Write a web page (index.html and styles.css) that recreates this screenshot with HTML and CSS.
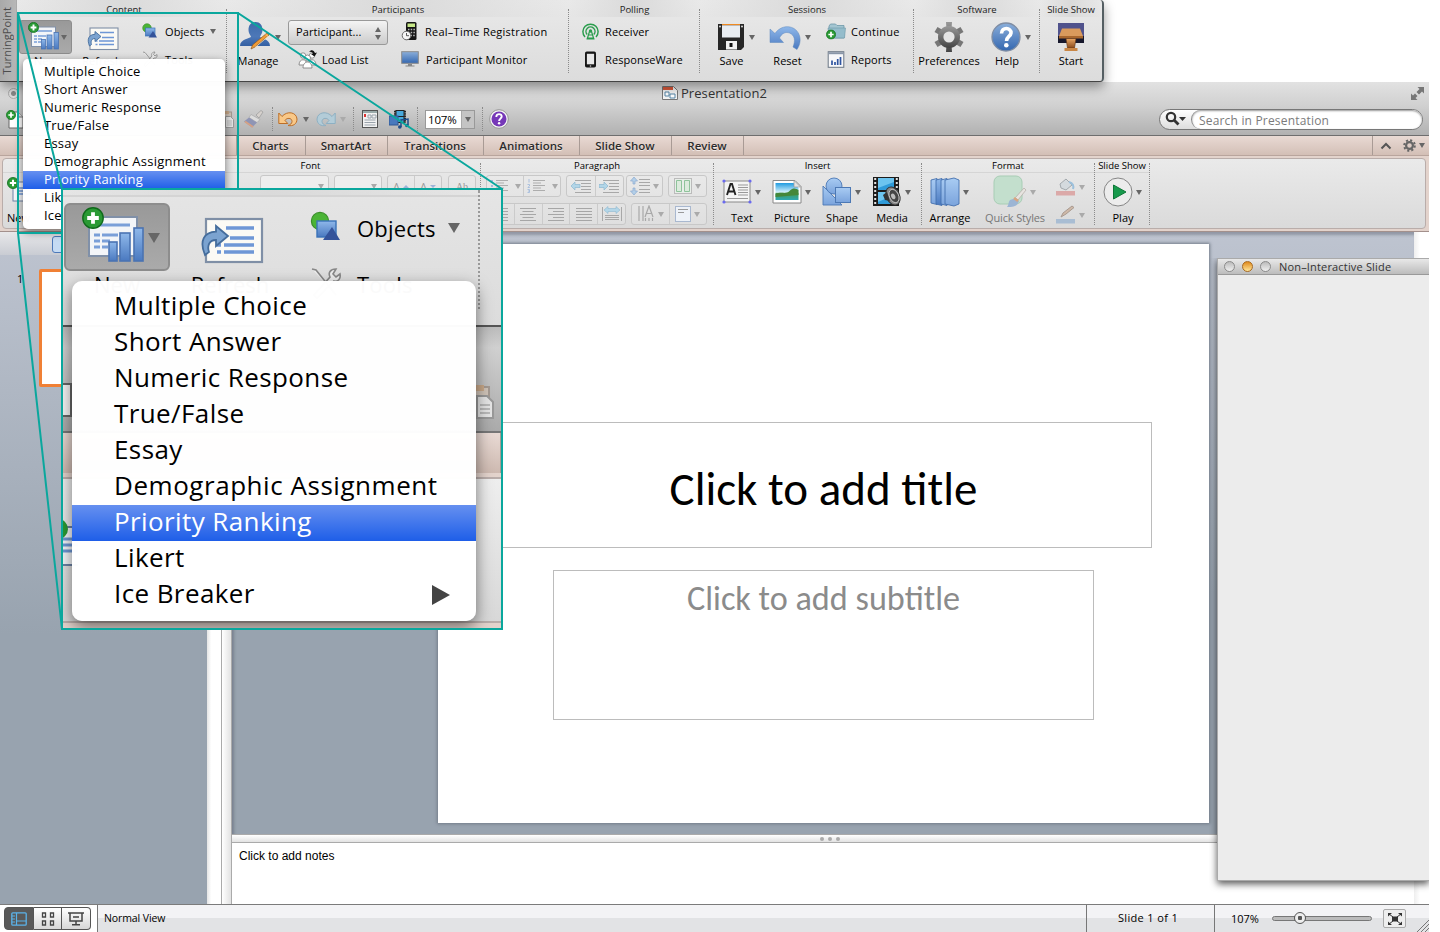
FILE: index.html
```html
<!DOCTYPE html>
<html lang="en">
<head>
<meta charset="utf-8">
<title>Presentation2</title>
<link rel="stylesheet" href="styles.css">
</head>
<body>
<svg class="defs" width="0" height="0">
  <defs>
    <linearGradient id="blue" x1="0" y1="0" x2="0" y2="1"><stop offset="0" stop-color="#8fb8ea"/><stop offset="1" stop-color="#4a79c0"/></linearGradient>
    <linearGradient id="lightblue" x1="0" y1="0" x2="0" y2="1"><stop offset="0" stop-color="#a9ccf3"/><stop offset="1" stop-color="#7aa3dc"/></linearGradient>
    <linearGradient id="gray" x1="0" y1="0" x2="0" y2="1"><stop offset="0" stop-color="#999"/><stop offset="1" stop-color="#444"/></linearGradient>
    <linearGradient id="wood" x1="0" y1="0" x2="0" y2="1"><stop offset="0" stop-color="#e9a765"/><stop offset="1" stop-color="#8a4a1b"/></linearGradient>
    <linearGradient id="sky" x1="0" y1="0" x2="0" y2="1"><stop offset="0" stop-color="#1f9be0"/><stop offset=".55" stop-color="#d8f2fb"/><stop offset=".6" stop-color="#3f9a56"/><stop offset="1" stop-color="#2fa8b5"/></linearGradient>
    <symbol id="plus" viewBox="0 0 11 11"><circle cx="5.5" cy="5.5" r="5.1" fill="#2a9a34" stroke="#0f6a1a" stroke-width=".7"/><path d="M5.500 2.600v5.800M2.600 5.500h5.800" stroke="#fff" stroke-width="1.900"/></symbol>
    <symbol id="new" viewBox="0 0 32 30">
      <rect x="3.500" y="6" width="24" height="19.500" fill="#f3f5f8" stroke="#8090a8"/>
      <path d="M8 10h16M6 15h3M10 15h8M6 18h3M10 18h4M6 21h3M10 21h3" stroke="#7a9fd8" stroke-width="1.500"/>
      <g fill="url(#blue)" stroke="#4a73b2" stroke-width=".8"><rect x="13.500" y="18.500" width="4" height="9.500"/><rect x="19" y="14" width="5" height="14"/><rect x="26" y="11.500" width="4.500" height="16.500"/></g>
      <use href="#plus" x="0" y="1" width="11" height="11"/>
    </symbol>
    <symbol id="refresh" viewBox="0 0 32 24">
      <rect x="3" y="1" width="28" height="21.500" fill="#fbfaf5" stroke="#7f8fa6" stroke-width="1.100"/>
      <path d="M13 5.500h14M15 10.500h12M12 14h15M12 17.500h15M8.500 14h2M8.500 17.500h2" stroke="#6e97d6" stroke-width="1.700"/>
      <path d="M2.500 19C-.5 12 2 7.500 8 7.300V4.500l6 5-6 5v-3c-3.500 0-4.500 3-3.500 6z" fill="#7ba3d0" stroke="#456d9c" stroke-width=".9"/>
    </symbol>
    <symbol id="objects" viewBox="0 0 16 16"><circle cx="5" cy="5" r="4.300" fill="#4bb436" stroke="#3a8f2a" stroke-width=".6"/><rect x="3.500" y="5" width="9.500" height="8" fill="url(#blue)" stroke="#3a73b8" stroke-width=".7"/><path d="M6.500 14.500L11 8l4 6.500z" fill="#34539a"/></symbol>
    <symbol id="tools" viewBox="0 0 16 16"><path d="M1 1l2 .5L9 9l4 5M13 1c-3 0-4 2-3 4L2 14l1.500 1.500L12 7c2 .5 3.500-1 3-3.500L13 5l-1.500-1.500z" fill="#eee" stroke="#888" stroke-width=".8"/></symbol>
    <linearGradient id="manageg" x1="0" y1="0" x2="0" y2="1"><stop offset="0" stop-color="#3d6aaa"/><stop offset=".6" stop-color="#4d78b8"/><stop offset="1" stop-color="#3460a3"/></linearGradient>
    <symbol id="manage" viewBox="0 0 32 32"><path d="M9.500 9c0-5 2.500-8 7-8s7 3 7 8c0 3-1.500 5-2.500 6.500 0 2 10 2 10 9.500H1c0-7.500 11-7.500 11-9.500C11 14 9.500 12 9.500 9z" fill="url(#manageg)"/><path d="M28 12l2 2-14 12-4 2 1.500-4z" fill="#f29b35" stroke="#8c5a24" stroke-width=".7"/><path d="M27 13.500l2 2L16 26.500" fill="none" stroke="#ffe2b0" stroke-width=".8"/></symbol>
    <symbol id="people" viewBox="0 0 20 20"><g fill="#fff" stroke="#858585" stroke-width=".9"><circle cx="5" cy="6.500" r="2.700"/><circle cx="14" cy="6.500" r="2.700"/><path d="M1 16c0-7 8-7 8 0zM10 16c0-7 8-7 8 0z"/><circle cx="9.500" cy="9" r="3"/><path d="M5 19c0-8 9-8 9 0z"/></g><path d="M11 3c2-3 5-2 6 1l2-.5-2.500 4L13 5l2-.5c-.5-1-2-2-4-1.500z" fill="#111"/></symbol>
    <symbol id="clicker" viewBox="0 0 16 20"><rect x="4.500" y="1" width="10.500" height="18" rx="1.500" fill="#151515"/><rect x="6" y="2.500" width="7.500" height="3.500" fill="#c7e888"/><path d="M6.500 8.500h7M6.500 11.500h7M9 14.500h5" stroke="#bbb" stroke-width="1.400" stroke-dasharray="1.500 1.200"/><circle cx="5" cy="14.500" r="4.300" fill="#f7f7f7" stroke="#666"/><path d="M5 12v2.700h2.500" fill="none" stroke="#333" stroke-width=".8"/></symbol>
    <linearGradient id="helpg" x1="0" y1="0" x2="0" y2="1"><stop offset="0" stop-color="#8aaeda"/><stop offset="1" stop-color="#3467b0"/></linearGradient>
    <symbol id="monitor" viewBox="0 0 18 16"><rect x=".7" y=".7" width="16.600" height="11.600" fill="url(#helpg)" stroke="#8a8a8a"/><path d="M7 13h4v1.500h2.500v1h-9v-1H7z" fill="#888"/></symbol>
    <symbol id="receiver" viewBox="0 0 17 17"><g fill="none" stroke="#2a9d4d" stroke-width="1.500"><path d="M3 14a7.600 7.600 0 1 1 11 0M5.200 11.500a4.500 4.500 0 1 1 6.600 0"/></g><circle cx="8.500" cy="8" r="1.700" fill="#2a9d4d"/><path d="M7.500 8.500L5.500 15h6l-2-6.500M4.500 16h8M6.500 12h4" stroke="#2a9d4d" fill="none" stroke-width="1.200"/></symbol>
    <symbol id="phone" viewBox="0 0 12 17"><rect x=".5" y=".5" width="11" height="16" rx="1.800" fill="#171717"/><rect x="2.400" y="2.800" width="7.200" height="10.500" fill="#e8e8e8"/><circle cx="6" cy="15" r=".8" fill="#ccc"/></symbol>
    <symbol id="floppy" viewBox="0 0 28 28"><path d="M1 1h26v23l-3 3H1z" fill="#272727"/><path d="M5 1h18v1.300H5z" fill="#ef8a22"/><path d="M5 2.300h18v12.200H5z" fill="#e9edf2"/><rect x="9" y="18" width="11" height="8.500" fill="#f2f2f2"/><rect x="12.500" y="20" width="3" height="4" fill="#111"/><circle cx="3" cy="3.500" r="1" fill="#ddd"/><circle cx="25" cy="3.500" r="1" fill="#ddd"/></symbol>
    <symbol id="reset" viewBox="0 0 32 28"><path d="M1 6v13.500h13.500l-4-4.500c2-4.500 6-6.500 10-5 5.500 2.500 6 7.500 3.500 14l4 2.500C33 19 32 10 25 5.500 18 1.500 10 4.500 6 10.500z" fill="url(#blue)" stroke="#5b86bd" stroke-width=".5"/></symbol>
    <symbol id="folder" viewBox="0 0 20 17"><path d="M3 3l1.500-2h5L11 2.500h7V15H3z" fill="#a3c5d1" stroke="#6d98a8" stroke-width=".8"/><path d="M2 5h17.500L18.500 15H3z" fill="#94bccb" stroke="#6d98a8" stroke-width=".6"/><use href="#plus" x="0" y="6.500" width="10" height="10"/></symbol>
    <symbol id="report" viewBox="0 0 17 17"><rect x=".7" y=".7" width="15.600" height="15.600" fill="#f8f8fa" stroke="#6b7785"/><path d="M1 2.200h15" stroke="#8996a8" stroke-width="2"/><path d="M4.500 14V9.500M7.500 14v-3M10.200 14V8M13 14V6" stroke="#2f55a0" stroke-width="1.700"/></symbol>
    <symbol id="gear" viewBox="0 0 30 30"><g fill="url(#gray)"><path d="M12 0h6l-.5 7h-5zM12 30h6l-.5-7h-5z"/><g transform="rotate(60 15 15)"><path d="M12 0h6v30h-6z" fill="#777"/></g><g transform="rotate(120 15 15)"><path d="M12 0h6v30h-6z" fill="#777"/></g><circle cx="15" cy="15" r="11"/></g><circle cx="15" cy="15" r="5.600" fill="#e4e4e4"/></symbol>
    <symbol id="help" viewBox="0 0 30 30"><circle cx="15" cy="15" r="14" fill="url(#helpg)" stroke="#7f8da3" stroke-width="1.300"/><path d="M10.500 11.500c0-7 10-6 9.500-.5-.3 3.500-4.500 3.500-4.500 8" fill="none" stroke="#fff" stroke-width="3.600"/><circle cx="15.300" cy="23.200" r="2.300" fill="#fff"/></symbol>
    <symbol id="podium" viewBox="0 0 28 30"><rect x="1" y="1" width="26" height="20" fill="#50528c"/><path d="M1 14h26v7H1z" fill="#17182c"/><path d="M5 6.500h18l3 7.500H2z" fill="#d99a5c"/><path d="M2 14h24v2.500H2z" fill="#a8672e"/><path d="M9 16.500h10L17.500 26h-7z" fill="url(#wood)" stroke="#5e3212" stroke-width=".6"/><path d="M7.500 26h13v3h-13z" fill="#c98746"/></symbol>
    <symbol id="docicon" viewBox="0 0 16 14"><path d="M.5.5h11l4 4v9H.5z" fill="#f4f4f4" stroke="#777"/><path d="M1 1h10v3H1z" fill="#d9593b"/><path d="M3 6h4v4H3zM8 8h5v4H8z" fill="#fff" stroke="#5786a8"/></symbol>
    <symbol id="undo" viewBox="0 0 20 16"><path d="M.8 2v10.500h9L7 9.500c1.500-3 7-3 7 1 0 2-2 3.500-4 4 5 1 9-1.500 9-6.500C18.500 1 9-.5 4 5.500z" fill="#f9c888" stroke="#bd6f28"/></symbol>
    <symbol id="redo" viewBox="0 0 20 16"><path d="M19.200 2v10.500h-9L13 9.500c-1.500-3-7-3-7 1 0 2 2 3.500 4 4-5 1-9-1.500-9-6.500C1.500 1 11-.5 16 5.500z" fill="#b3ccd8" stroke="#8db0c3"/></symbol>
    <symbol id="brush" viewBox="0 0 20 18"><path d="M12 5l5-4.500 2 1.500-4 6z" fill="#d6d1cd" stroke="#999" stroke-width=".7"/><path d="M7 4.500l9 5-3 3-8-5z" fill="#ddd" stroke="#999" stroke-width=".5"/><path d="M5 7.500l8 5-5 5L0 11.500z" fill="#8f95b5"/><path d="M1 11.500l8 5.500" stroke="#d5a184" stroke-width="2"/></symbol>
    <symbol id="clip" viewBox="0 0 12 18"><rect x=".5" y="2" width="9" height="12" fill="#cfc3b8" stroke="#a49a92"/><path d="M3 1h4v3H3z" fill="#c9a98a"/><path d="M3.500 6.500h5l3 3v8h-8z" fill="#e5e5e5" stroke="#999"/><path d="M5 11h5M5 13h5M5 15h5" stroke="#aaa" stroke-width=".7"/></symbol>
    <symbol id="newdoc" viewBox="0 0 18 20"><path d="M3 3h9l5 5v11H3z" fill="#fff" stroke="#666"/><path d="M12 3v5h5" fill="#ddd" stroke="#777"/><use href="#plus" x="0" y="1" width="10" height="10"/></symbol>
    <symbol id="toolbox" viewBox="0 0 16 18"><rect x=".5" y=".5" width="15" height="17" fill="#f2f2f2" stroke="#555"/><path d="M1 2h14" stroke="#9aa" stroke-width="2"/><path d="M3 4v3" stroke="#d33" stroke-width="2"/><path d="M6 5h3v3H6zM10 5h4v3h-4zM2.500 10h11M2.500 12.500h11M2.500 15h11" fill="none" stroke="#9aa3ac"/></symbol>
    <symbol id="mediab" viewBox="0 0 20 20"><rect x="5" y="1" width="12" height="13" fill="#222"/><path d="M7.500 2h7v5h-7zM7.500 8h7v5h-7z" fill="#49a9dc"/><path d="M5.800 1v13M16.200 1v13" stroke="#ddd" stroke-dasharray="1 1.300"/><rect y="7" width="9" height="9" fill="#4879bd" stroke="#2f5996"/><path d="M12 18V11l7-1v6" fill="none" stroke="#1d4c8a" stroke-width="1.500"/><circle cx="10.800" cy="18" r="1.800" fill="#1d4c8a"/><circle cx="17.800" cy="16.500" r="1.800" fill="#1d4c8a"/></symbol>
    <symbol id="qmark" viewBox="0 0 20 20"><circle cx="10" cy="10" r="9.300" fill="#f4f4f4" stroke="#888" stroke-width=".8"/><circle cx="10" cy="10" r="7.500" fill="#7638b8"/><path d="M7.300 8c0-4 5.700-3.500 5.400-.3-.2 2-2.600 2-2.600 4.400" fill="none" stroke="#fff" stroke-width="1.900"/><circle cx="10.100" cy="14.200" r="1.200" fill="#fff"/></symbol>
    <symbol id="textbox" viewBox="0 0 30 26"><rect x="2" y="2" width="26" height="21" fill="#f4f4f4" stroke="#8a8a8a"/><path d="M5 16l3.500-11h1.500l3.500 11M6.500 12.500h6" fill="none" stroke="#222" stroke-width="1.900"/><path d="M16 6h10M16 8.500h10M16 11h10M16 13.500h10M16 16h10M5 19.500h21" stroke="#999"/><g fill="#6a6aef"><circle cx="2" cy="2" r="1.600"/><circle cx="28" cy="2" r="1.600"/><circle cx="2" cy="23" r="1.600"/><circle cx="28" cy="23" r="1.600"/></g></symbol>
    <symbol id="picture" viewBox="0 0 30 26"><path d="M1 1.500h22l6 6v16.500H1z" fill="#fff" stroke="#888"/><path d="M3.500 4h18l5 5v12h-23z" fill="url(#sky)"/><path d="M3.500 15c6-3 10 1 14-3s7-2 9-1v5l-23 2z" fill="#45873a"/><path d="M22 1.500V8h6.500z" fill="#e4e4e4" stroke="#999" stroke-width=".7"/></symbol>
    <symbol id="shape" viewBox="0 0 30 30"><path d="M1 9v19h19z" fill="url(#lightblue)" stroke="#4c78b4" stroke-width=".9"/><circle cx="12" cy="9" r="8" fill="url(#lightblue)" stroke="#4c78b4" stroke-width=".9"/><rect x="13.500" y="10.500" width="15" height="15" fill="url(#lightblue)" stroke="#4c78b4"/></symbol>
    <symbol id="media" viewBox="0 0 30 32"><rect x="1" y="1" width="26" height="29" fill="#1c1c1c"/><path d="M6 2h16v12H6zM6 16h16v12H6z" fill="#2f9bd9"/><path d="M6 2h16v4L6 12zM6 16h16v3L6 26z" fill="#6cc4ef"/><path d="M3.200 2v27M24.800 2v27" stroke="#e4e4e4" stroke-width="2" stroke-dasharray="2 2"/><ellipse cx="21" cy="20" rx="6.500" ry="9.500" transform="rotate(-25 21 20)" fill="#888" stroke="#333"/><ellipse cx="22" cy="20" rx="4.500" ry="7" transform="rotate(-25 22 20)" fill="#444" stroke="#ccc" stroke-width=".8"/><ellipse cx="21" cy="20.500" rx="2" ry="3" transform="rotate(-25 21 20)" fill="#bbb"/><path d="M11 19l4-3 3 9-5-1z" fill="#333"/></symbol>
    <symbol id="arrange" viewBox="0 0 30 30"><g fill="url(#lightblue)" stroke="#446fae" stroke-width=".9"><path d="M1 3l6-1.500v26L1 26z"/><path d="M6 3l6-1.500v27L6 27z" fill="url(#blue)"/><path d="M11 3l6-1.500v27L11 27z"/><path d="M15 3l9-2 5 2v24l-5 2-9-2z"/></g></symbol>
    <symbol id="qstyles" viewBox="0 0 34 34"><rect x="1" y="1" width="28" height="28" rx="6" fill="#c3dfcd" stroke="#a8cdb5"/><path d="M31 13l2 2-8 10-3-2z" fill="#e7e4e0" stroke="#b3aba5" stroke-width=".7"/><path d="M17 25l6-2 3 3c-2 6-6 6-12 6 2-2 1-5 3-7z" fill="#9cb5d4"/><path d="M21 23l4 3" stroke="#d9a57f" stroke-width="2.500"/></symbol>
    <symbol id="fill" viewBox="0 0 20 20"><path d="M4 7l6-5 6 6-6 5-5-2z" fill="#d4dade" stroke="#a3a9ad"/><path d="M13 5c4 1 5 4 4 7" stroke="#9cc0dc" stroke-width="2" fill="none"/><path d="M0 14h19v4.500H0z" fill="#dba9a8"/></symbol>
    <symbol id="line" viewBox="0 0 20 20"><path d="M16 1l2 1.500L10 9l-5 3 2-4z" fill="#cfb9a8" stroke="#a99a90"/><path d="M0 14h19v4.500H0z" fill="#a9bdd3"/></symbol>
    <symbol id="play" viewBox="0 0 30 30"><circle cx="15" cy="15" r="14" fill="#ececec" stroke="#858585"/><path d="M10.500 8v14L23 15z" fill="#179a4c" stroke="#0d7737"/></symbol>
    <symbol id="lines" viewBox="0 0 16 14"><path d="M0 1.500h16M2.500 4.500h11M0 7.500h16M2.500 10.500h11M0 13.500h16" stroke="#a6a6a6"/></symbol>
    <symbol id="just" viewBox="0 0 16 14"><path d="M0 1.500h16M0 4.500h16M0 7.500h16M0 10.500h16M0 13.500h16" stroke="#a6a6a6"/></symbol>
    <symbol id="right" viewBox="0 0 16 14"><path d="M0 1.500h16M5 4.500h11M0 7.500h16M5 10.500h11M0 13.500h16" stroke="#a6a6a6"/></symbol>
    <symbol id="list" viewBox="0 0 18 14"><path d="M6 1.500h12M6 6.500h12M6 11.500h12M6 4h8M6 9h8" stroke="#adadad"/><path d="M1 2h2M1 7h2M1 12h2" stroke="#a4bbdd" stroke-width="2"/></symbol>
    <symbol id="numlist" viewBox="0 0 18 14"><path d="M6 1.500h12M6 6.500h12M6 11.500h12M6 4h8M6 9h8" stroke="#adadad"/><path d="M2 0v3.500M.5 5.500h2v1.500L.8 8.500h2M.5 10.500h2v3h-2M1 12h1.500" stroke="#a4bbdd" fill="none" stroke-width=".9"/></symbol>
    <symbol id="outdent" viewBox="0 0 20 14"><path d="M4 1.500h16M10 4.500h10M10 7.500h10M10 10.500h10M4 13.500h16" stroke="#a8a8a8"/><path d="M0 7l4-4v2.500h5v3H4V11z" fill="#b3d6e8" stroke="#8db8d0" stroke-width=".7"/></symbol>
    <symbol id="indent" viewBox="0 0 20 14"><path d="M4 1.500h16M10 4.500h10M10 7.500h10M10 10.500h10M4 13.500h16" stroke="#a8a8a8"/><path d="M9 7L5 3v2.500H0v3h5V11z" fill="#b3d6e8" stroke="#8db8d0" stroke-width=".7"/></symbol>
    <symbol id="spacing" viewBox="0 0 20 18"><path d="M9 2.500h11M9 5.500h11M9 8.500h11M9 12.500h11M9 15.500h11" stroke="#a8a8a8"/><path d="M4 0l3.500 4H5v3H3V4H.5zM4 18l3.500-4H5v-3H3v3H.5z" fill="#b3cfe8" stroke="#8dabd0" stroke-width=".7"/></symbol>
    <symbol id="cols" viewBox="0 0 18 16"><rect x=".5" y=".5" width="17" height="15" fill="#e8eee9" stroke="#bbb"/><path d="M2.500 2.500h5v11h-5zM10.500 2.500h5v11h-5z" fill="#dcebdd" stroke="#8fc39b"/></symbol>
    <symbol id="distr" viewBox="0 0 20 16"><path d="M.5 1v14M19.500 1v14M3 9.500h14M3 11.500h14M3 13.500h14" stroke="#a8a8a8"/><path d="M2 4l4-3.500v2h8v-2L18 4l-4 3.500v-2H6v2z" fill="#b3d6e8" stroke="#8db8d0" stroke-width=".6"/></symbol>
    <symbol id="tdir" viewBox="0 0 18 18"><path d="M2 1v15M6 1v15M8.500 13v3M12 13v3M15.500 13v3M8 12l4-11 4 11M9.500 8.500h5" fill="none" stroke="#a8a8a8" stroke-width="1.200"/></symbol>
    <symbol id="valign" viewBox="0 0 16 16"><rect x=".5" y=".5" width="15" height="15" fill="#eef2f8" stroke="#a9b8cf"/><path d="M3 3.500h10M3 6.500h6" stroke="#999"/></symbol>
  </defs>
</svg>

<div class="stage">
  <main class="window">
    <header class="titlebar">
      <i class="light dot"></i>
      <div class="doc"><svg width="16" height="14"><use href="#docicon"/></svg><span>Presentation2</span></div>
      <svg class="expand" width="15" height="15" viewBox="0 0 15 15"><path d="M7.500 1H14v6.500l-2-2-3 3L6.500 6l3-3zM7.500 14H1V7.500l2 2 2-2L7.500 10l-2 2z" fill="#777"/></svg>
    </header>
    <div class="quick">
      <svg width="18" height="20"><use href="#newdoc"/></svg>
      <svg class="q-clip" width="12" height="18"><use href="#clip"/></svg>
      <svg class="q-brush" width="20" height="18"><use href="#brush"/></svg>
      <i class="vdots q1"></i>
      <svg class="q-undo" width="20" height="16"><use href="#undo"/></svg><i class="arr"></i>
      <svg class="q-redo" width="20" height="16"><use href="#redo"/></svg><i class="arr dim"></i>
      <i class="vdots q2"></i>
      <svg class="q-box" width="16" height="18"><use href="#toolbox"/></svg>
      <svg class="q-media" width="20" height="20"><use href="#mediab"/></svg>
      <i class="vdots q3"></i>
      <div class="zoombox"><span>107%</span><b><i class="arr"></i></b></div>
      <i class="vdots q3"></i>
      <svg class="q-help" width="20" height="20"><use href="#qmark"/></svg>
      <div class="search">
        <svg width="22" height="16" viewBox="0 0 22 16"><circle cx="6" cy="6" r="4.200" fill="none" stroke="#333" stroke-width="2.200"/><path d="M9 9l4.500 4.500" stroke="#333" stroke-width="2.800"/><path d="M14 6h7l-3.500 4z" fill="#333"/></svg>
        <div class="field">Search in Presentation</div>
      </div>
    </div>
    <nav class="tabs">
      <span class="t0"></span><span class="t1">Charts</span><span class="t2">SmartArt</span><span class="t3">Transitions</span><span class="t4">Animations</span><span class="t5">Slide Show</span><span class="t6">Review</span>
      <div class="tabend">
        <svg width="12" height="8" viewBox="0 0 12 8"><path d="M1.500 6.500L6 2l4.500 4.500" fill="none" stroke="#555" stroke-width="2"/></svg>
        <svg width="13" height="13" viewBox="0 0 13 13"><circle cx="6.500" cy="6.500" r="3.400" fill="none" stroke="#666" stroke-width="2.200"/><circle cx="6.500" cy="6.500" r="5.300" fill="none" stroke="#666" stroke-width="2" stroke-dasharray="2.100 2.060"/></svg>
        <i class="arr"></i>
      </div>
    </nav>
    <section class="ribbon"><div class="panel">
      <div class="grp g-slides"><h3></h3><div class="newslide"><svg width="24" height="26" viewBox="0 0 24 26"><rect x="6" y="5" width="24" height="19" fill="#f4f6fa" stroke="#6c82a5"/><path d="M12 11h12M12 14h12M12 17h12" stroke="#6e97d6" stroke-width="1.500"/><use href="#plus" width="12" height="12"/></svg><span>New</span></div></div>
      <div class="grp g-font"><h3>Font</h3>
        <div class="row fontrow"><div class="box sel w1"><i class="arr dim"></i></div><div class="box sel w2"><i class="arr dim"></i></div><div class="box w3"><em>A<i class="tri up"></i></em><em>A<i class="tri dn"></i></em></div><div class="box w4"><em class="ab">Ab</em></div></div>
      </div>
      <div class="grp g-para"><h3>Paragraph</h3>
        <div class="row">
          <div class="box p1"><em><svg width="18" height="14"><use href="#list"/></svg></em><em class="thin"><i class="arr dim"></i></em><em><svg width="18" height="14"><use href="#numlist"/></svg></em><em class="thin"><i class="arr dim"></i></em></div>
          <div class="box p2"><em><svg width="20" height="14"><use href="#outdent"/></svg></em><em><svg width="20" height="14"><use href="#indent"/></svg></em></div>
          <div class="box p3"><em><svg width="20" height="18"><use href="#spacing"/></svg><i class="arr dim"></i></em></div>
          <div class="box p4"><em><svg width="18" height="16"><use href="#cols"/></svg><i class="arr dim"></i></em></div>
        </div>
        <div class="row">
          <div class="box p5"><em><svg width="16" height="14"><use href="#just"/></svg></em><em><svg width="16" height="14"><use href="#lines"/></svg></em><em><svg width="16" height="14"><use href="#right"/></svg></em><em><svg width="16" height="14"><use href="#just"/></svg></em><em><svg width="20" height="16"><use href="#distr"/></svg></em></div>
          <div class="box p6"><em><svg width="18" height="18"><use href="#tdir"/></svg><i class="arr dim"></i></em><em><svg width="16" height="16"><use href="#valign"/></svg><i class="arr dim"></i></em></div>
        </div>
      </div>
      <div class="grp g-insert"><h3>Insert</h3><div class="bigs">
        <div class="big"><div class="pic"><svg width="30" height="26"><use href="#textbox"/></svg><i class="arr"></i></div><span>Text</span></div>
        <div class="big"><div class="pic"><svg width="30" height="26"><use href="#picture"/></svg><i class="arr"></i></div><span>Picture</span></div>
        <div class="big"><div class="pic"><svg width="30" height="30"><use href="#shape"/></svg><i class="arr"></i></div><span>Shape</span></div>
        <div class="big"><div class="pic"><svg width="30" height="32"><use href="#media"/></svg><i class="arr"></i></div><span>Media</span></div>
      </div></div>
      <div class="grp g-format"><h3>Format</h3><div class="bigs">
        <div class="big"><div class="pic"><svg width="30" height="30"><use href="#arrange"/></svg><i class="arr"></i></div><span>Arrange</span></div>
        <div class="big qs"><div class="pic"><svg width="34" height="34"><use href="#qstyles"/></svg><i class="arr dim"></i></div><span>Quick Styles</span></div>
        <div class="stack"><div><svg width="20" height="20"><use href="#fill"/></svg><i class="arr dim"></i></div><div><svg width="20" height="20"><use href="#line"/></svg><i class="arr dim"></i></div></div>
      </div></div>
      <div class="grp g-show"><h3>Slide Show</h3><div class="bigs"><div class="big"><div class="pic"><svg width="30" height="30"><use href="#play"/></svg><i class="arr"></i></div><span>Play</span></div></div></div>
    </div></section>
    <section class="work">
      <aside class="thumbs"><div class="thumbtabs"><i></i></div><div class="thumbrow"><span>1</span><div class="thumb"></div></div></aside>
      <div class="scroller"></div><div class="splitter"></div>
      <div class="center">
        <div class="canvas"><article class="slide"><div class="ph title">Click to add title</div><div class="ph sub">Click to add subtitle</div></article></div>
        <div class="hsplit"><i></i><i></i><i></i></div>
        <div class="notes">Click to add notes</div>
      </div>
      <div class="scroller last"></div>
    </section>
    <footer class="status">
      <div class="views">
        <b class="on"><svg width="16" height="14" viewBox="0 0 16 14"><rect x=".8" y=".8" width="14.400" height="12.400" rx="1" fill="none" stroke="#5bb3ea" stroke-width="1.300"/><path d="M5.500 1v12M5.500 9H15M1 4h3M1 7h3M1 10h3" stroke="#5bb3ea" stroke-width="1.200"/></svg></b>
        <b><svg width="14" height="14" viewBox="0 0 14 14"><path d="M1.500 1h3v4h-3zM9.500 1h3v4h-3zM1.500 9h3v4h-3zM9.500 9h3v4h-3z" fill="none" stroke="#444" stroke-width="1.300"/></svg></b>
        <b><svg width="16" height="14" viewBox="0 0 16 14"><path d="M0 1h16M2 1.500v7.500h12V1.500M5 5h6M8 9v3M4 12.800h8" fill="none" stroke="#444" stroke-width="1.500"/></svg></b>
      </div>
      <div class="s1">Normal View</div><div class="s2">Slide 1 of 1</div>
      <div class="s3"><span>107%</span><div class="track"><i></i></div>
        <b class="fit"><svg width="14" height="12" viewBox="0 0 14 12"><path d="M4 3.500h6v5H4z" fill="#333"/><path d="M0 0h4L0 3.500zM14 0h-4l4 3.500zM0 12h4L0 8.500zM14 12h-4l4-3.500z" fill="#333"/><path d="M1 1l4 3M13 1L9 4M1 11l4-3M13 11L9 8" stroke="#333"/></svg></b>
        <svg class="grip" width="12" height="12" viewBox="0 0 12 12"><path d="M0 12L12 0M4 12l8-8M8 12l4-4" stroke="#777"/></svg>
      </div>
    </footer>
  </main>

  <aside class="palette"><header><i class="light"></i><i class="light amber"></i><i class="light"></i><span>Non–Interactive Slide</span></header></aside>

  <section class="tp">
    <div class="tptab"><span>TurningPoint</span></div>
    <div class="tg tg-content"><h3>Content</h3><div class="tb">
      <div class="tbig pressed"><div class="pic"><svg width="32" height="30"><use href="#new"/></svg><i class="arr"></i></div><span>New</span></div>
      <div class="tbig refresh"><div class="pic"><svg width="32" height="24"><use href="#refresh"/></svg></div><span>Refresh</span></div>
      <div class="tcol c-obj"><div><svg width="16" height="16"><use href="#objects"/></svg><span>Objects</span><i class="arr"></i></div><div><svg width="16" height="16"><use href="#tools"/></svg><span>Tools</span></div></div>
    </div></div>
    <div class="tg tg-part"><h3>Participants</h3><div class="tb">
      <div class="tbig manage"><div class="pic"><svg width="32" height="32"><use href="#manage"/></svg><i class="arr"></i></div><span>Manage</span></div>
      <div class="tcol c-list"><div class="select"><span>Participant...</span><i class="updn"><i class="arr u"></i><i class="arr"></i></i></div><div class="load"><svg width="20" height="20"><use href="#people"/></svg><span>Load List</span></div></div>
      <div class="tcol c-reg"><div><svg width="17" height="20"><use href="#clicker"/></svg><span class="wide">Real–Time Registration</span></div><div><svg width="18" height="16"><use href="#monitor"/></svg><span>Participant Monitor</span></div></div>
    </div></div>
    <div class="tg tg-poll"><h3>Polling</h3><div class="tb"><div class="tcol c-poll"><div><svg width="17" height="17"><use href="#receiver"/></svg><span>Receiver</span></div><div><svg width="17" height="17"><use href="#phone"/></svg><span>ResponseWare</span></div></div></div></div>
    <div class="tg tg-sess"><h3>Sessions</h3><div class="tb">
      <div class="tbig save"><div class="pic"><svg width="28" height="28"><use href="#floppy"/></svg><i class="arr"></i></div><span>Save</span></div>
      <div class="tbig reset"><div class="pic"><svg width="32" height="28"><use href="#reset"/></svg><i class="arr"></i></div><span>Reset</span></div>
      <div class="tcol c-sess"><div><svg width="20" height="17"><use href="#folder"/></svg><span class="wide">Continue</span></div><div><svg width="20" height="17"><use href="#report"/></svg><span>Reports</span></div></div>
    </div></div>
    <div class="tg tg-soft"><h3>Software</h3><div class="tb">
      <div class="tbig prefs"><div class="pic"><svg width="30" height="30"><use href="#gear"/></svg></div><span>Preferences</span></div>
      <div class="tbig helpb"><div class="pic"><svg width="30" height="30"><use href="#help"/></svg><i class="arr"></i></div><span>Help</span></div>
    </div></div>
    <div class="tg tg-show"><h3>Slide Show</h3><div class="tb"><div class="tbig start"><div class="pic"><svg width="28" height="30"><use href="#podium"/></svg></div><span>Start</span></div></div></div>
  </section>

  <ul class="menu"><li>Multiple Choice</li><li>Short Answer</li><li>Numeric Response</li><li>True/False</li><li>Essay</li><li>Demographic Assignment</li><li class="hot">Priority Ranking</li><li>Likert</li><li>Ice Breaker<i class="more"></i></li></ul>

  <svg class="guides" width="1440" height="932"><path d="M18 13H238V233H18zM18 13L62 189M18 233L62 629M238 13L502 189" fill="none" stroke="#0aa79d" stroke-width="2"/></svg>

  <section class="callout"><div class="lens">
    <div class="lens-tp"><div class="tg tg-content"><h3></h3><div class="tb">
      <div class="tbig pressed"><div class="pic"><svg width="32" height="30"><use href="#new"/></svg><i class="arr"></i></div><span>New</span></div>
      <div class="tbig refresh"><div class="pic"><svg width="32" height="24"><use href="#refresh"/></svg></div><span>Refresh</span></div>
      <div class="tcol c-obj"><div><svg width="16" height="16"><use href="#objects"/></svg><span>Objects</span><i class="arr"></i></div><div><svg width="16" height="16"><use href="#tools"/></svg><span>Tools</span></div></div>
    </div></div></div>
    <div class="lens-bar"><i class="sheet"></i><svg width="12" height="18"><use href="#clip"/></svg></div>
    <div class="lens-tabs"><i></i></div>
    <div class="lens-ribbon"><div class="lens-panel"><svg width="8" height="26" viewBox="14 0 8 26"><rect x="6" y="5" width="24" height="19" fill="#f4f6fa" stroke="#6c82a5"/><path d="M12 11h12M12 14h12M12 17h12" stroke="#6e97d6" stroke-width="1.500"/><circle cx="12" cy="6" r="5" fill="#2a9a34"/></svg></div></div>
    <ul class="menu"><li>Multiple Choice</li><li>Short Answer</li><li>Numeric Response</li><li>True/False</li><li>Essay</li><li>Demographic Assignment</li><li class="hot">Priority Ranking</li><li>Likert</li><li>Ice Breaker<i class="more"></i></li></ul>
  </div></section>
</div>
</body>
</html>
```
FILE: styles.css
```css
* { box-sizing: border-box; }
body { margin: 0; background: #fff; font-family: "Open Sans", "Noto Sans", sans-serif; font-size: 11px; color: #000; }
.defs { position: absolute; }
svg { display: block; flex: none; }
h3 { margin: 0; font-weight: 400; }
.stage { position: relative; width: 1440px; height: 932px; overflow: hidden; }
.window { width: 1429px; height: 932px; padding-top: 82px; display: flex; flex-direction: column; }

.arr { flex: none; width: 0; height: 0; border: 3px solid transparent; border-top: 5px solid #666; border-bottom: 0; }
.arr.dim { border-top-color: #aaa; }
.vdots { flex: none; width: 0; border-left: 1px dotted #8a8a8a; height: 24px; }
.light { flex: none; width: 11px; height: 11px; border-radius: 50%; border: 1px solid #8b8b8b; background: linear-gradient(#bbb, #f0f0f0); }
.light.dot { background: radial-gradient(#888 0 2px, #ddd 3px); border-color: #aaa; }
.light.amber { background: linear-gradient(#e08a1c, #ffe69a); border-color: #a86a20; }

/* Title bar and quick access row */
.titlebar { height: 24px; background: linear-gradient(#e2e2e2, #d0d0d0); display: flex; align-items: center; padding: 0 4px 2px 8px; }
.doc { flex: 1; display: flex; justify-content: center; align-items: center; gap: 3px; font-size: 13px; letter-spacing: .1px; color: #333; }
.expand { margin-right: 0; }
.quick { height: 30px; display: flex; align-items: center; padding-left: 6px; background: linear-gradient(#d0d0d0, #b1b1b1); border-bottom: 1px solid #6e6e6e; padding-bottom: 3px; }
.q-clip { margin-left: 198px; }
.q-brush { margin-left: 10px; }
.q1 { margin-left: 8px; }
.q-undo { margin: 0 5px; }
.q-redo { margin: 0 4px 0 7px; }
.q2 { margin-left: 7px; }
.q-box { margin-left: 8px; }
.q-media { margin: 0 8px 0 11px; }
.zoombox { display: flex; width: 50px; height: 19px; margin: 0 7px; border: 1px solid #999; background: #fff; font-size: 11.500px; line-height: 17px; }
.zoombox span { width: 35px; padding-left: 2px; letter-spacing: -.2px; }
.zoombox b { flex: 1; background: #c4c4c4; border-left: 1px solid #aaa; display: flex; align-items: center; justify-content: center; }
.q-help { margin-left: 6px; }
.search { margin: 0 6px 0 auto; width: 264px; height: 21px; border: 1px solid #777; border-radius: 11px; display: flex; align-items: center; padding-left: 5px; background: linear-gradient(#fff, #ddd); }
.field { margin-left: 4px; flex: 1; height: 19px; border-left: 1px solid #888; border-radius: 10px; background: #fff; box-shadow: inset 0 1px 2px #999; padding-left: 7px; font-size: 12px; letter-spacing: .18px; line-height: 21px; color: #7b7b7b; }

/* Tabs */
.tabs { height: 20px; display: flex; background: linear-gradient(#e9dad4, #d3bfb6); font-weight: 600; font-size: 11.500px; line-height: 19px; text-align: center; color: #2b2b2b; text-shadow: 0 1px 0 #f3e9e5; border-bottom: 1px solid #b9a59d; }
.tabs > span { border-right: 1px solid #a99b95; padding-right: 1px; }
.t0 { width: 237px; } .t1 { width: 69px; } .t2 { width: 82px; } .t3 { width: 96px; } .t4 { width: 96px; } .t5 { width: 92px; } .t6 { width: 72px; }
.tabend { margin-left: auto; width: 57px; border-left: 1px solid #a99b95; display: flex; align-items: center; padding-left: 7px; }
.tabend svg + svg { margin-left: 11px; }
.tabend .arr { margin-left: 3px; }

/* Ribbon */
.ribbon { height: 76px; background: #e3d3cc; padding: 2px 3px 2px 2px; border-bottom: 1px solid #a3908c; }
.panel { height: 71px; display: flex; border: 1px solid #b9adaa; border-radius: 4px; background: linear-gradient(#eaeaea, #dadada); }
.grp { position: relative; flex: none; border-right: 1px dotted #8b8b8b; height: 62px; margin-top: 4px; }
.grp h3 { margin-top: -3px; height: 13px; line-height: 11px; font-size: 9.500px; text-align: center; border-bottom: 1px solid #d5d5d5; }
.g-slides { width: 138px; } .g-font { width: 340px; } .g-para { width: 233px; } .g-insert { width: 208px; } .g-format { width: 173px; } .g-show { width: 55px; }
.newslide { padding: 4px 0 0 4px; white-space: nowrap; overflow: hidden; }
.newslide span { display: block; line-height: 14px; margin-top: 8px; }
.row { display: flex; padding: 2px 0 0 5px; gap: 5px; }
.row + .row { padding-top: 6px; }
.box { height: 22px; border: 1px solid #c8c8c8; border-radius: 3px; display: flex; background: rgba(255,255,255,.13); }
.box em { flex: 1; display: flex; align-items: center; justify-content: center; gap: 3px; font-style: normal; color: #999; }
.box em + em { border-left: 1px solid #cbcbcb; }
.box em.thin { flex: 0 0 12px; border-left-color: transparent; }
.fontrow { gap: 5px; padding-left: 119px; }
.box.sel { background: #eee; align-items: center; justify-content: flex-end; padding-right: 4px; }
.w1 { width: 69px; } .w2 { width: 48px; } .w3 { width: 55px; } .w4 { width: 28px; margin-left: 1px; }
.tri { border: 3px solid transparent; } .tri.up { border-bottom-color: #9db3d8; border-top: 0; } .tri.dn { border-top-color: #9db3d8; border-bottom: 0; }
.box em.ab { font: 10px "Liberation Serif", serif; }
.p1 { width: 75px; } .p2 { width: 58px; } .p3 { width: 37px; margin-left: -3px; } .p4 { width: 39px; } .p5 { width: 140px; } .p6 { width: 76px; }
.bigs { display: flex; padding-left: 3px; }
.big { width: 50px; display: flex; flex-direction: column; align-items: center; white-space: nowrap; }
.pic { display: flex; align-items: center; justify-content: center; }
.big .pic { height: 36px; margin: 1px 0; width: 50px; gap: 3px; padding-right: 2px; }
.big span { line-height: 14px; }
.g-format .big { width: 50px; } .g-format .big.qs { width: 80px; color: #777; } .g-format .bigs { padding-left: 3px; }
.big.qs span { letter-spacing: -.15px; }
.stack { padding: 0 0 0 1px; } .stack div { display: flex; align-items: center; height: 28px; gap: 3px; }
.g-show .bigs { padding-left: 3px; }

/* Workspace */
.work { height: 672px; display: flex; }
.thumbs { width: 207px; background: linear-gradient(#bec4d0 0, #98a3af 60%); }
.thumbtabs { height: 23px; background: linear-gradient(#e8e8ea, #c9ccd3); display: flex; justify-content: flex-start; padding: 4px 0 0 52px; }
.thumbtabs i { width: 17px; height: 17px; border: 1px solid #4d79b9; border-radius: 3px; background: #c5dbf3; }
.thumbrow { display: flex; padding: 14px 0 0 17px; gap: 15px; font-size: 11px; }
.thumbrow span { width: 7px; padding-top: 2px; }
.thumb { width: 160px; height: 118px; border: 3px solid #f08035; background: #fff; border-radius: 2px; }
.scroller { width: 15px; background: linear-gradient(90deg, #e4e4e4, #fff 30%); border-right: 1px solid #aaa; }
.scroller.last { width: 15px; border-right: 0; background: linear-gradient(90deg, #eee, #fff 40%); }
.splitter { width: 10px; background: linear-gradient(90deg, #fff, #e2e2e2); border-right: 1px solid #aaa; }
.center { width: 1182px; display: flex; flex-direction: column; }
.canvas { height: 602px; background: linear-gradient(#bec4d0 0, #98a3af 60%); padding: 12px 0 0 206px; box-shadow: inset 2px 3px 3px rgba(60,65,80,.35); }
.slide { width: 771px; height: 579px; background: #fff; box-shadow: 0 0 3px 1px #737c88; padding-top: 178px; }
.ph { border: 1px solid #bcbcbc; text-align: center; font-family: Carlito, Calibri, Lato, sans-serif; white-space: nowrap; }
.ph.title { margin-left: 57px; width: 657px; height: 126px; line-height: 133px; font-size: 47px; }
.ph.sub { margin: 22px 0 0 115px; width: 541px; height: 150px; line-height: 55px; font-size: 34.200px; color: #8b8b8b; }
.hsplit { height: 9px; background: linear-gradient(#fff, #e2e2e2); border-top: 1px solid #aaa; border-bottom: 1px solid #aaa; display: flex; justify-content: center; align-items: center; gap: 4px; padding-left: 14px; }
.hsplit i { width: 4px; height: 4px; border-radius: 50%; background: #aaa; }
.notes { flex: 1; background: #fff; padding: 6px 7px; font: 12px/14px "Liberation Sans", sans-serif; }

/* Status bar */
.status { height: 28px; display: flex; border-top: 1px solid #7b7b7b; background: linear-gradient(#f3f3f5 0 50%, #e2e3e5 50%); line-height: 26px; }
.views { width: 98px; padding: 2px 0 0 4px; background: #fff; border-right: 1px solid #777; display: flex; }
.views b { height: 23px; width: 28px; border: 1px solid #555; border-left-width: 0; background: linear-gradient(#fff, #d7d7d7); display: flex; align-items: center; justify-content: center; }
.views b.on { width: 30px; background: #595959; border-left-width: 1px; border-radius: 4px 0 0 4px; } .views b:last-child { width: 29px; border-radius: 0 4px 4px 0; }
.s1 { width: 989px; padding-left: 6px; border-right: 1px solid #777; font-size: 10.500px; letter-spacing: -.1px; }
.s2 { width: 128px; text-align: center; padding-right: 5px; border-right: 1px solid #777; letter-spacing: .35px; }
.s3 { flex: 1; display: flex; align-items: center; padding-left: 16px; }
.s3 span { width: 41px; }
.track { width: 100px; height: 5px; border: 1px solid #777; border-radius: 3px; background: #bbb; }
.track i { display: block; width: 12px; height: 12px; margin: -5px 0 0 21px; border: 1px solid #555; border-radius: 50%; background: radial-gradient(#555 0 2px, #eee 2.500px); }
.fit { margin-left: 11px; width: 23px; height: 19px; border: 1px solid #aaa; border-radius: 2px; background: #eee; display: flex; align-items: center; justify-content: center; }
.grip { margin-left: auto; align-self: flex-end; }

.palette { position: absolute; left: 1217px; top: 258px; width: 212px; height: 623px; background: #ececec; border: 1px solid #aaa; border-right: 0; box-shadow: 0 3px 7px rgba(0,0,0,.65); clip-path: inset(0 0 -12px -8px); }
.palette header { height: 16px; display: flex; align-items: center; background: linear-gradient(#e8e8e8, #bcbcbc); border-bottom: 1px solid #999; padding-left: 6px; gap: 7px; font-size: 11px; letter-spacing: .17px; line-height: 14px; color: #333; }
.palette header span { margin-left: 1px; }

/* TurningPoint toolbar */
.tp { position: absolute; left: 0; top: 0; width: 1104px; height: 82px; background: linear-gradient(#e9e9e9, #dcdcdc); border-bottom: 1px solid #444; border-right: 2px solid #555f63; border-radius: 0 4px 4px 0; box-shadow: 0 5px 12px rgba(0,0,0,.4); display: flex; }
.tptab { flex: none; width: 17px; background: linear-gradient(90deg, #a9a9a9, #b7b7b7); border-right: 1px solid #aaa; display: flex; align-items: center; justify-content: center; }
.tptab span { writing-mode: vertical-rl; transform: rotate(180deg); font-size: 11px; letter-spacing: .1px; margin-right: 3px; color: #4c4c4c; }
.tg { flex: none; position: relative; border: 0; }
.tg + .tg::before { content: ""; position: absolute; left: -1px; top: 9px; height: 64px; border-left: 1px dotted #8a8a8a; }
.tg h3 { height: 17px; line-height: 19px; font-size: 9.500px; text-align: center; background: linear-gradient(90deg, rgba(215,215,215,0), #dadada 50%, rgba(215,215,215,0)); color: #222; }
.tg-content { width: 210px; } .tg-part { width: 342px; } .tg-poll { width: 131px; } .tg-sess { width: 214px; } .tg-soft { width: 126px; } .tg-show { width: 62px; }
.tg-content h3 { padding-left: 4px; }
.tb { display: flex; }
.tbig { display: flex; flex-direction: column; align-items: center; white-space: nowrap; }
.tbig .pic { height: 34px; margin-top: 3px; gap: 4px; }
.tbig span { line-height: 13px; }
.pressed { margin-left: 2px; width: 53px; }
.pressed .pic { width: 53px; background: linear-gradient(#999, #aaa); border: 1px solid #8d8d8d; border-radius: 3px; gap: 1px; padding: 0 0 3px 3px; }
.pressed .arr { margin-top: 4px; }
.refresh { width: 60px; } .refresh .pic { padding: 3px 0 0 1px; }
.tcol { display: flex; flex-direction: column; white-space: nowrap; }
.tcol > div { height: 28px; display: flex; align-items: center; gap: 7px; }
.tcol span { letter-spacing: .1px; }
.tcol span.wide { letter-spacing: .25px; }
.c-obj { margin-left: 10px; }
.tcol .arr { margin-left: -1px; }
.manage { margin-left: 10px; width: 46px; } .manage span { margin-right: 4px; }
.c-list { margin-left: 5px; width: 100px; }
.tcol .select { height: 25px; margin: 3px 0 0; border: 1px solid #999; border-radius: 3px; background: linear-gradient(#f4f4f4, #ccc); padding: 0 6px 2px 7px; justify-content: space-between; }
.updn { display: flex; flex-direction: column; gap: 3px; padding-top: 3px; } .updn .arr { margin: 0; } .updn .u { transform: rotate(180deg); }
.tcol .load { padding-left: 10px; gap: 4px; }
.c-reg { margin-left: 13px; }
.c-poll { margin-left: 13px; } .c-poll > div { gap: 6px; }
.save { margin-left: 15px; width: 42px; } .save span { margin-right: 9px; }
.reset { margin-left: 12px; width: 42px; } .reset span { margin-right: 5px; }
.c-sess { margin-left: 15px; } .c-sess > div { gap: 5px; }
.prefs { width: 70px; } .helpb { width: 54px; } .helpb span { margin-right: 8px; }
.start { width: 63px; }

.menu { position: absolute; left: 23px; top: 59px; width: 202px; height: 170px; margin: 0; padding: 4px 0; list-style: none; background: rgba(255,255,255,.98); border-radius: 5px; box-shadow: 0 3px 8px rgba(0,0,0,.5); font-size: 13px; letter-spacing: .2px; line-height: 17px; }
.menu li { height: 18px; padding: 0 0 1px 21px; display: flex; align-items: center; white-space: nowrap; }
.menu li:nth-child(6) { letter-spacing: .27px; }
.menu .hot { background: linear-gradient(#6690f0, #1e5ee8); color: #fff; font-weight: 500; }
.more { margin-left: auto; margin-right: 13px; border: 5px solid transparent; border-left: 9px solid #444; border-right: 0; }
.guides { position: absolute; left: 0; top: 0; }

/* Magnified inset */
.callout { position: absolute; left: 61px; top: 188px; width: 442px; height: 442px; border: 2px solid #0aa79d; overflow: hidden; background: #fff; }
.lens { width: 221px; height: 221px; transform: translate(-1px, -1px) scale(2); transform-origin: 0 0; position: relative; }
.lens-tp { height: 69px; border-bottom: 1px solid #555; background: linear-gradient(#e5e5e5, #dcdcdc); }
.lens-tp .tg { width: 210px; margin-left: -1px; height: 60px; border-right: 1px dotted #999; }
.lens-tp h3 { height: 4px; border-bottom: 1px solid #d4d4d4; }
.lens-tp .tcol { padding-top: 1px; }
.lens-tp .tcol > div { gap: 7.500px; }
.lens-bar { height: 53px; display: flex; justify-content: space-between; background: linear-gradient(#bbb, #d0d0d0 20%, #aaa); border-bottom: 1px solid #777; padding: 28px 5px 0 0; }
.sheet { width: 5px; height: 17px; background: #f4f4f4; border: 1px solid #666; border-left: 0; }
.lens-tabs { height: 20px; background: linear-gradient(#e9dad4, #cdb9b0); display: flex; justify-content: flex-end; }
.lens-tabs i { width: 2px; border-left: 1px solid #a99b95; }
.lens-ribbon { height: 79px; background: #e3d3cc; padding: 2px 0 4px; }
.lens-panel { height: 73px; padding-top: 19px; background: linear-gradient(#eee, #d8d8d8); border: solid #b9adaa; border-width: 1px 0; }
.lens .menu { left: 5px; top: 46px; }
```
